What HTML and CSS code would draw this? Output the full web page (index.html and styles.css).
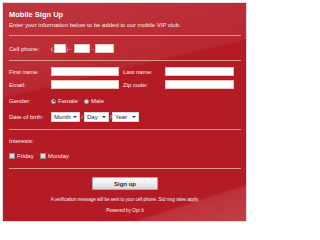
FILE: index.html
```html
<!DOCTYPE html>
<html>
<head>
<meta charset="utf-8">
<title>Mobile Sign Up</title>
<link rel="stylesheet" href="styles.css">
</head>
<body>
<div class="panel">
  <h1 class="title">Mobile Sign Up</h1>
  <p class="intro">Enter your information below to be added to our mobile VIP club.</p>
  <div class="sep sep-a"></div>

  <div class="row row-cell">
    <span class="label">Cell phone:</span>
    <span class="punct p-open">(</span>
    <span class="box w-area"></span>
    <span class="punct p-close">)</span>
    <span class="punct p-dash1">-</span>
    <span class="box w-pre"></span>
    <span class="punct p-dash2">-</span>
    <span class="box w-line"></span>
  </div>
  <div class="sep sep-b"></div>

  <div class="row row-first">
    <span class="label">First name:</span>
    <span class="box w-name"></span>
    <span class="label label-right">Last name:</span>
    <span class="box w-name2"></span>
  </div>
  <div class="row row-email">
    <span class="label">Email:</span>
    <span class="box w-name"></span>
    <span class="label label-right">Zip code:</span>
    <span class="box w-name2"></span>
  </div>

  <div class="row row-gender">
    <span class="label">Gender:</span>
    <span class="radio checked"></span><span class="opt">Female</span>
    <span class="radio radio-2"></span><span class="opt">Male</span>
  </div>

  <div class="row row-dob">
    <span class="label">Date of birth:</span>
    <span class="select w-month">Month<span class="arrow"></span></span>
    <span class="slash">/</span>
    <span class="select w-day">Day<span class="arrow"></span></span>
    <span class="slash">/</span>
    <span class="select w-year">Year<span class="arrow"></span></span>
  </div>
  <div class="sep sep-c"></div>

  <div class="row row-interests"><span class="label">Interests:</span></div>
  <div class="row row-checks">
    <span class="check"></span><span class="opt">Friday</span>
    <span class="check check-2"></span><span class="opt">Monday</span>
  </div>
  <div class="sep sep-d"></div>

  <div class="actions"><span class="button">Sign up</span></div>
  <p class="note">A verification message will be sent to your cell phone. Std msg rates apply.</p>
  <p class="powered">Powered by Opt It</p>
</div>
</body>
</html>
```

FILE: styles.css
```css
html, body {
  margin: 0;
  padding: 0;
  background: #ffffff;
}
body {
  padding: 3px;
  font-family: "Liberation Sans", Arial, sans-serif;
}
.panel {
  width: 243px;
  height: 218px;
  box-sizing: border-box;
  padding: 7px 5px 0 6px;
  color: #fbeeee;
  box-shadow: 0 0 0 1px #e4dcdc;
  background:
    linear-gradient(166.5deg, rgba(255,255,255,0.12) 0, rgba(255,255,255,0.06) 91px, rgba(255,255,255,0) 93px),
    linear-gradient(162deg, rgba(255,255,255,0) 247px, rgba(255,255,255,0.10) 250px, rgba(255,255,255,0.16) 100%),
    #b51b24;
}
.title {
  margin: 0;
  font-size: 7.5px;
  line-height: 10px;
  font-weight: bold;
  color: #ffffff;
}
.intro {
  margin: 1px 0 0;
  font-size: 6px;
  line-height: 8px;
}
.sep {
  height: 1px;
  background: #d99a86;
}
.sep-a { margin-top: 6px; }
.sep-b { margin-top: 7px; }
.sep-c { margin-top: 7px; }
.sep-d { margin-top: 7px; }

.row {
  display: flex;
  align-items: center;
  font-size: 6px;
  line-height: 8px;
}
.row-cell { margin-top: 8px; height: 9px; }
.row-first { margin-top: 6px; height: 9px; }
.row-email { margin-top: 4px; height: 9px; }
.row-gender { margin-top: 7px; height: 10px; }
.row-dob { margin-top: 6px; height: 10px; }
.row-interests { margin-top: 6px; height: 10px; }
.row-checks { margin-top: 5px; height: 10px; }

.label {
  width: 42px;
  flex: none;
  white-space: nowrap;
}
.label-right {
  margin-left: 4px;
}
.box {
  flex: none;
  height: 9px;
  box-sizing: border-box;
  background: #ffffff;
  border: 1px solid #e9c3b6;
}
.w-area { width: 12px; }
.w-pre { width: 16px; }
.w-line { width: 19px; }
.w-name { width: 68px; }
.w-name2 { width: 69px; }

.punct {
  flex: none;
  width: 2px;
  text-align: center;
}
.p-open { margin-right: 1px; }
.p-dash1 { margin-left: 1px; margin-right: 3px; }
.p-dash2 { margin-left: 2px; margin-right: 1px; }

.radio {
  flex: none;
  width: 5px;
  height: 5px;
  box-sizing: border-box;
  border-radius: 50%;
  background: #e6e6e6;
  border: 1px solid #9a9a9a;
  position: relative;
}
.radio.checked::after {
  content: "";
  position: absolute;
  left: 0.5px;
  top: 0.5px;
  width: 2px;
  height: 2px;
  border-radius: 50%;
  background: #333a48;
}
.radio-2 { margin-left: 6px; }
.opt {
  margin-left: 2px;
  white-space: nowrap;
}

.select {
  flex: none;
  height: 10px;
  box-sizing: border-box;
  display: flex;
  align-items: center;
  justify-content: space-between;
  padding: 0 2px 0 2px;
  background: #ffffff;
  border: 1px solid #d8d8d8;
  color: #222222;
  font-size: 6px;
}
.w-month { width: 29px; }
.w-day { width: 25px; }
.w-year { width: 27px; }
.arrow {
  width: 0;
  height: 0;
  border-left: 2px solid transparent;
  border-right: 2px solid transparent;
  border-top: 2px solid #333333;
}
.slash {
  flex: none;
  width: 4px;
  text-align: center;
}
.slash + .w-year { margin-left: -1px; }

.check {
  flex: none;
  width: 6px;
  height: 6px;
  box-sizing: border-box;
  background: linear-gradient(#f4f4f4, #cfcfcf);
  border: 1px solid #8f8f8f;
}
.check-2 { margin-left: 6px; }

.actions {
  margin-top: 8px;
  display: flex;
  justify-content: center;
}
.button {
  width: 66px;
  height: 13px;
  box-sizing: border-box;
  display: flex;
  align-items: center;
  justify-content: center;
  background: linear-gradient(#ffffff, #e9e9e9 60%, #d6d6d6);
  border: 1px solid #a9a9a9;
  border-radius: 1px;
  color: #2a2a2a;
  font-size: 6px;
  font-weight: bold;
}
.note {
  margin: 6px 0 0;
  text-align: center;
  font-size: 4.5px;
  line-height: 8px;
}
.powered {
  margin: 2px 0 0;
  text-align: center;
  font-size: 4.7px;
  line-height: 9px;
}
```
